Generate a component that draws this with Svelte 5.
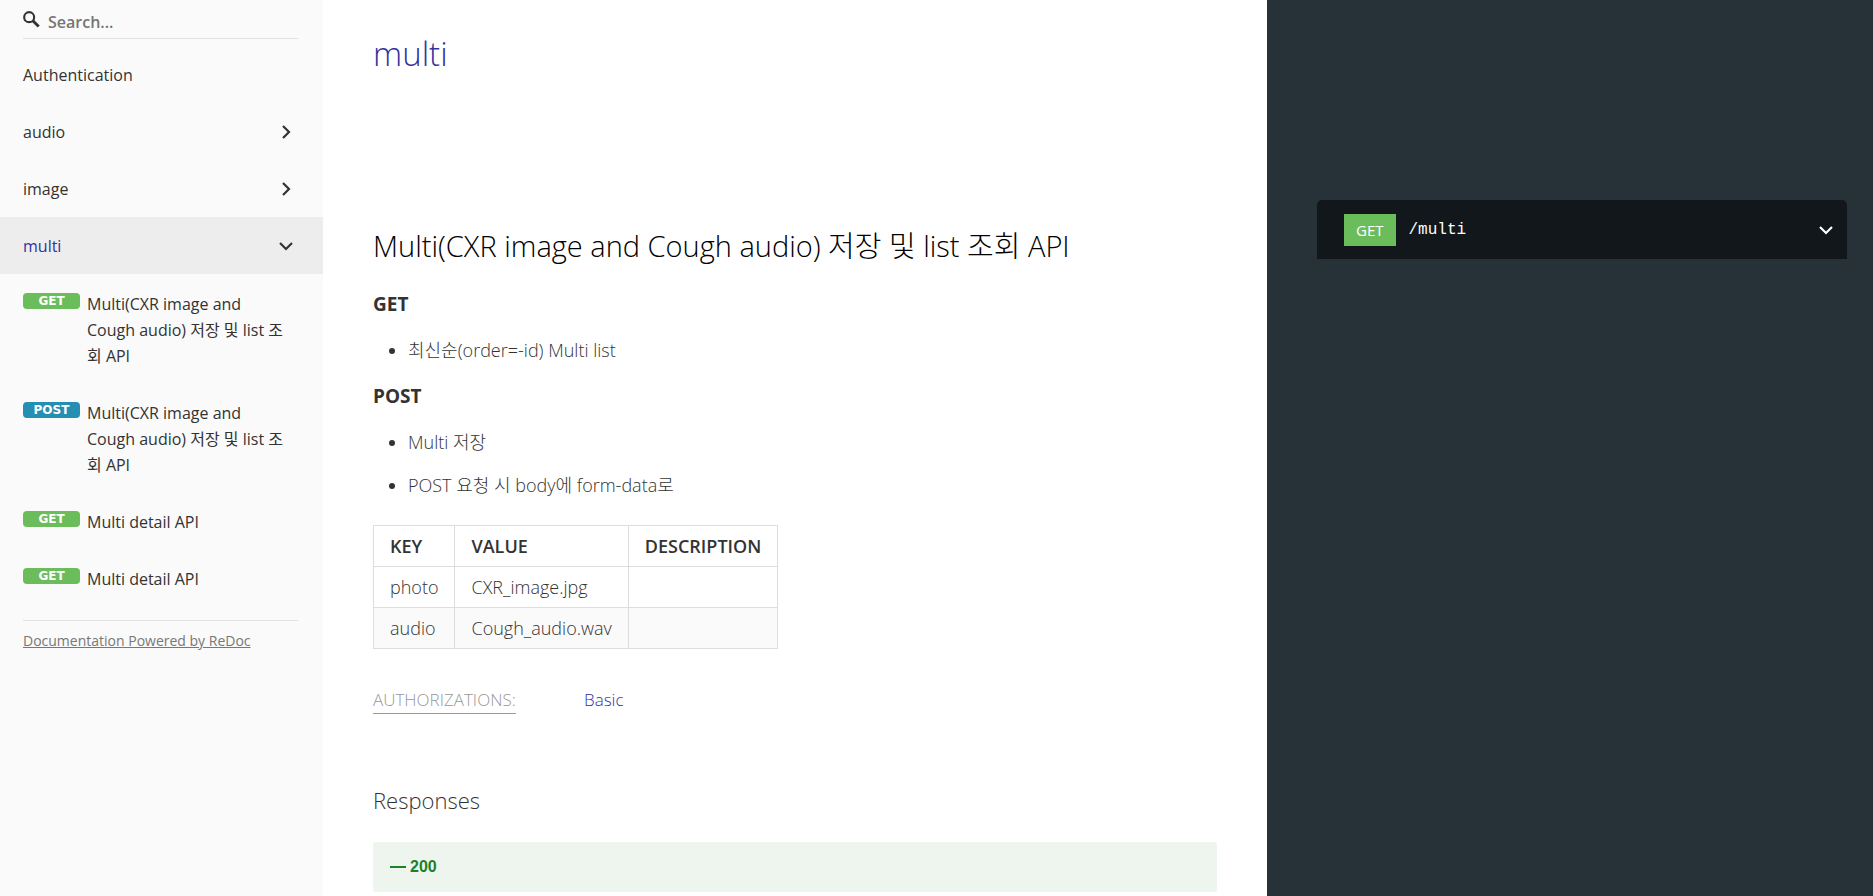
<script>
  let query = $state('');

  const groups = [
    { name: 'Authentication' },
    { name: 'audio', arrow: 'right' },
    { name: 'image', arrow: 'right' },
    { name: 'multi', arrow: 'down', active: true }
  ];

  const operations = [
    { verb: 'GET', title: 'Multi(CXR image and\nCough audio) 저장 및 list 조\n회 API' },
    { verb: 'POST', title: 'Multi(CXR image and\nCough audio) 저장 및 list 조\n회 API' },
    { verb: 'GET', title: 'Multi detail API' },
    { verb: 'GET', title: 'Multi detail API' }
  ];

  const rows = [
    ['photo', 'CXR_image.jpg', ''],
    ['audio', 'Cough_audio.wav', '']
  ];
</script>

{#snippet chevron(direction)}
  <svg class="chevron" class:down={direction === 'down'} viewBox="0 0 16 16" aria-hidden="true">
    <path d="M5 2l6 6-6 6" fill="none" stroke="currentColor" stroke-width="2.2" />
  </svg>
{/snippet}

<div class="page">
  <aside class="sidebar">
    <label class="search">
      <svg viewBox="0 0 16 16" aria-label="Search">
        <circle cx="5.8" cy="5.8" r="4.7" fill="none" stroke="currentColor" stroke-width="2" />
        <path d="M9.2 9.2l5.6 5.4" fill="none" stroke="currentColor" stroke-width="2.8" />
      </svg>
      <input type="text" placeholder="Search..." bind:value={query} />
    </label>

    <nav>
      <ul class="menu">
        {#each groups as group}
          <li>
            <a class="group" class:active={group.active} href="#{group.name}">
              <span>{group.name}</span>
              {#if group.arrow}{@render chevron(group.arrow)}{/if}
            </a>
          </li>
        {/each}
        {#each operations as op, i}
          <li>
            <a class="operation" href="#operation-{i}">
              <span class="verb {op.verb.toLowerCase()}">{op.verb}</span>
              <span class="title">{op.title}</span>
            </a>
          </li>
        {/each}
      </ul>
    </nav>

    <div class="credit"><a href="#redoc">Documentation Powered by ReDoc</a></div>
  </aside>

  <main class="content">
    <h1>multi</h1>

    <h2>Multi(CXR image and Cough audio) 저장 및 list 조회 API</h2>

    <h3>GET</h3>
    <ul class="notes">
      <li>최신순(order=-id) Multi list</li>
    </ul>
    <h3>POST</h3>
    <ul class="notes">
      <li>Multi 저장</li>
      <li>POST 요청 시 body에 form-data로</li>
    </ul>

    <table>
      <thead>
        <tr><th>KEY</th><th>VALUE</th><th>DESCRIPTION</th></tr>
      </thead>
      <tbody>
        {#each rows as row}
          <tr>{#each row as cell}<td>{cell}</td>{/each}</tr>
        {/each}
      </tbody>
    </table>

    <div class="auth">
      <div class="auth-label"><span>AUTHORIZATIONS:</span></div>
      <a href="#Basic">Basic</a>
    </div>

    <h4>Responses</h4>
    <button class="response" type="button">
      <svg viewBox="0 0 18 18" aria-hidden="true"><path d="M1 9h16" stroke="currentColor" stroke-width="2" /></svg>
      <strong>200</strong>
    </button>
  </main>

  <section class="samples">
    <button class="endpoint" type="button">
      <span class="http">GET</span>
      <span class="path">/multi</span>
      {@render chevron('down')}
    </button>
  </section>
</div>

<style>
  :global(body) {
    margin: 0;
    background: #fff;
  }

  .page {
    display: grid;
    grid-template-columns: 323px minmax(0, 944fr) minmax(0, 606fr);
    height: 100vh;
    overflow: hidden;
    color: #333;
    font: 300 17px/26px "Open Sans", "Noto Sans CJK KR", sans-serif;
  }

  a {
    color: inherit;
    text-decoration: none;
  }

  ul {
    margin: 0;
    padding: 0;
  }

  .chevron {
    flex: none;
    width: 16px;
    height: 16px;
  }

  .chevron.down {
    transform: rotate(90deg);
  }

  .sidebar {
    background: #fafafa;
    font-size: 16px;
    font-weight: 400;
  }

  .search {
    display: flex;
    align-items: center;
    gap: 8px;
    height: 39px;
    margin: 0 25px 7px 23px;
    border-bottom: 1px solid #e1e1e1;
    box-sizing: border-box;
  }

  .search svg {
    flex: none;
    width: 17px;
    height: 17px;
  }

  .search input {
    flex: 1;
    min-width: 0;
    padding: 6px 0 0;
    border: 0;
    outline: none;
    background: none;
    color: #333;
    font: 600 16px/26px "Open Sans", sans-serif;
  }

  .search input::placeholder {
    color: #757575;
    opacity: 1;
  }

  .menu {
    list-style: none;
  }

  .group {
    display: flex;
    align-items: center;
    justify-content: space-between;
    padding: 16px 29px 15px 23px;
  }

  .active {
    background: #ededed;
    color: #32329f;
  }

  .group .chevron {
    color: #333;
  }

  .operation {
    display: flex;
    align-items: flex-start;
    gap: 7px;
    padding: 17px 24px 14px 23px;
  }

  .verb {
    flex: none;
    width: 57px;
    height: 16px;
    margin-top: 2px;
    border-radius: 4px;
    background: #6bbd5b;
    color: #fff;
    font: 700 12px/16px "DejaVu Sans", sans-serif;
    text-align: center;
  }

  .verb.post {
    background: #248fb2;
  }

  .title {
    white-space: pre-line;
  }

  .credit {
    margin: 14px 25px 0 23px;
    padding-top: 7px;
    border-top: 1px solid #e1e1e1;
    color: #777;
    font-size: 14px;
  }

  .credit a {
    text-decoration: underline;
  }

  .content {
    padding: 32px 50px 0;
  }

  h1,
  h2,
  h3,
  h4 {
    margin: 0;
    font-weight: 300;
  }

  h1 {
    color: #32329f;
    font-size: 33px;
    line-height: 44px;
  }

  h2 {
    margin-top: 148px;
    margin-bottom: 22px;
    color: #000;
    font-size: 29px;
    line-height: 44px;
  }

  h3 {
    font-size: 19px;
    font-weight: 700;
    line-height: 28px;
  }

  .notes {
    padding: 2px 0 19px 35px;
    font-size: 18px;
  }

  .notes li {
    margin-top: 17px;
    line-height: 26px;
  }

  table {
    margin-top: 8px;
    border-collapse: collapse;
    font-size: 18px;
  }

  th,
  td {
    padding: 7px 16px;
    border: 1px solid #ddd;
    text-align: left;
  }

  th {
    font-weight: 600;
  }

  tbody tr:nth-child(2n) {
    background: #fafafa;
  }

  .auth {
    display: flex;
    margin-top: 38px;
  }

  .auth-label {
    width: 25%;
    color: #999;
  }

  .auth-label span {
    display: inline-block;
    border-bottom: 1px solid #999;
  }

  .auth a {
    color: #32329f;
  }

  h4 {
    margin-top: 70px;
    font-size: 22px;
    line-height: 32px;
  }

  .response {
    display: flex;
    align-items: center;
    gap: 3px;
    width: 100%;
    height: 50px;
    margin-top: 26px;
    padding: 0 16px;
    border: 0;
    border-radius: 2px;
    background: #eef5ee;
    color: #1d8127;
    font: 700 16px/24px "Liberation Sans", sans-serif;
  }

  .response svg {
    width: 18px;
    height: 18px;
  }

  .samples {
    padding: 200px 26px 0 50px;
    background: #263238;
  }

  .endpoint {
    display: flex;
    align-items: center;
    width: 100%;
    height: 59px;
    padding: 0 13px 0 27px;
    border: 0;
    border-radius: 5px 5px 0 0;
    background: #11171a;
    color: #fff;
    text-align: left;
  }

  .http {
    padding: 0 12px;
    background: #6bbd5b;
    font: 400 15px/32px "Open Sans", sans-serif;
  }

  .path {
    flex: 1;
    padding: 0 13px;
    font: 400 16px/24px "Liberation Mono", monospace;
  }
</style>
